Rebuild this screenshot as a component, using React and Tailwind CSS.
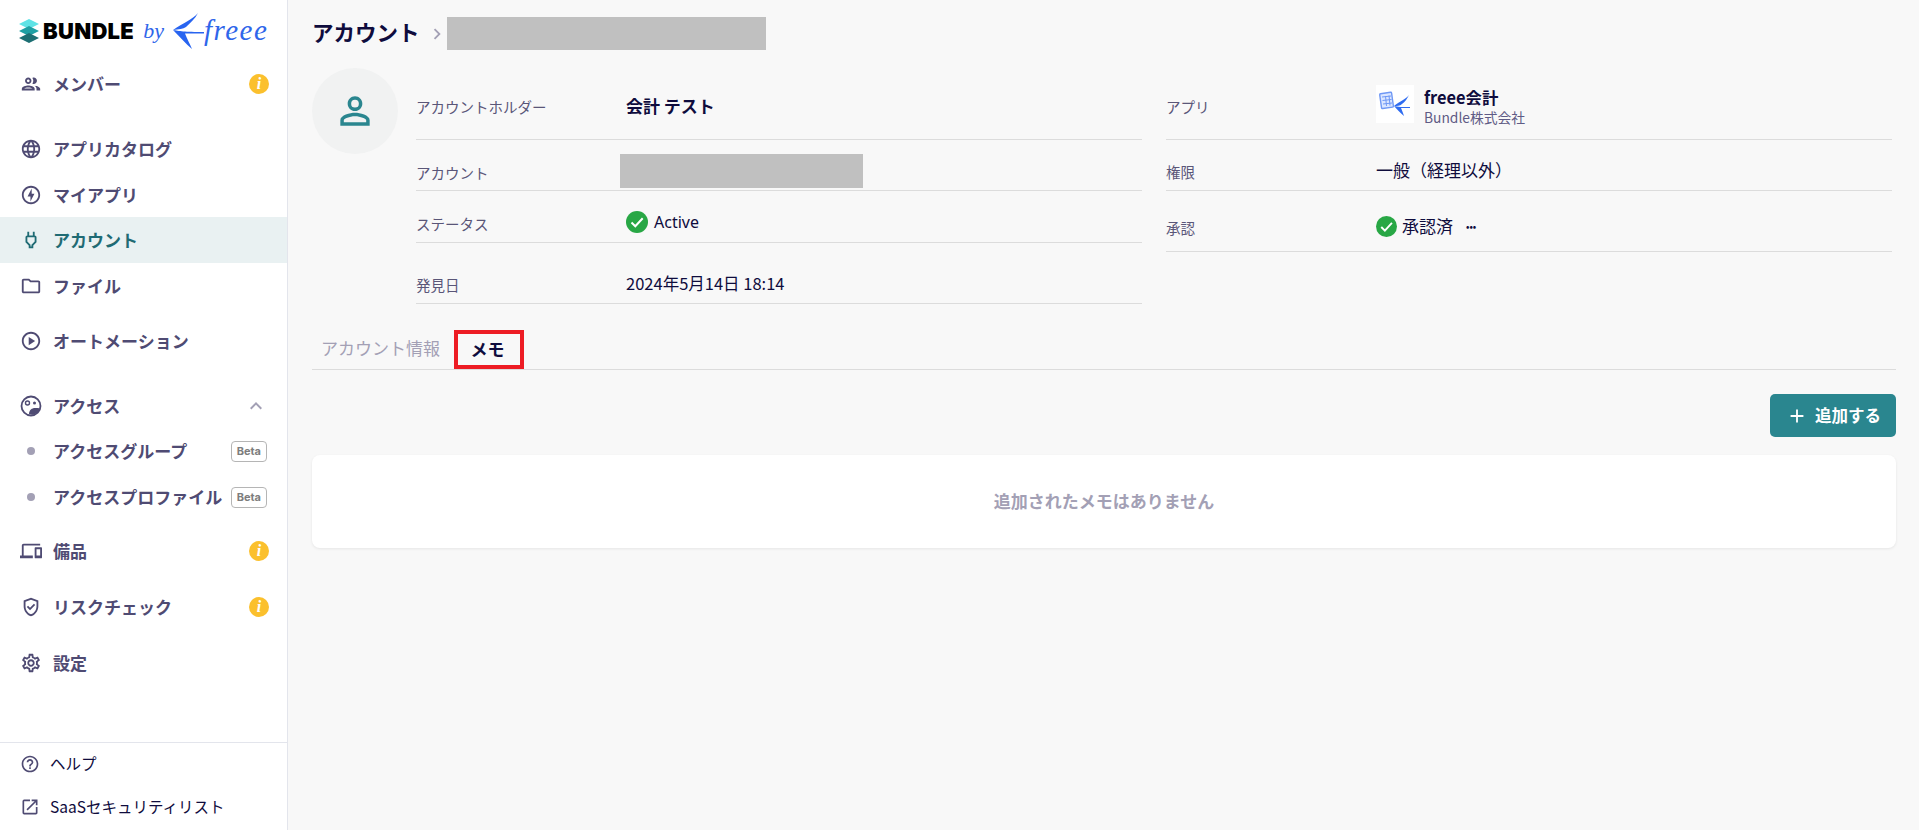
import React from 'react';
import {
  MdOutlinePeople, MdLanguage, MdOutlineOfflineBolt, MdOutlinePower, MdOutlineFolder,
  MdOutlinePlayCircle, MdOutlineDevices, MdOutlineGppGood, MdOutlineSettings,
  MdHelpOutline, MdOpenInNew, MdOutlinePersonOutline, MdExpandLess, MdChevronRight, MdAdd,
} from 'react-icons/md';

const jp = "font-['Noto_Sans_CJK_JP','Noto_Sans',sans-serif]";

const BundleMark = () => (
  <svg width="22" height="24" viewBox="0 0 22 24">
    <path d="M11 0l10 5-10 5-10-5z" fill="#5fe3e6" />
    <path d="M11 7l10 5-10 5-10-5z" fill="#1fa0a4" />
    <path d="M11 14l10 5-10 5-10-5z" fill="#1d6f73" />
  </svg>
);

const FreeeBird = ({ className }) => (
  <svg className={className} viewBox="0 0 32 36">
    <path d="M26 0C21 6 11 10 1 17c6-1 10-1 13-3C18 10 23 6 26 0z" fill="#2864f0" />
    <path d="M1 17c6 1 11 2 31 2v1.500H13C15 26 18 31 20 36 14 31 8 24 1 17z" fill="#2864f0" />
  </svg>
);

const Logo = () => (
  <div className="flex items-center h-[61px] pl-[18px]">
    <BundleMark />
    <span className="ml-[3px] font-['Inter'] font-black text-[22px] tracking-[0.3px] text-black leading-none">BUNDLE</span>
    <span className="ml-[9px] font-['Liberation_Serif'] italic text-[22px] text-[#2f66ea] leading-none">by</span>
    <FreeeBird className="ml-[8px] w-[32px] h-[36px]" />
    <span className="font-['Liberation_Serif'] italic text-[29px] tracking-[1.5px] text-[#2f66ea] leading-none">freee</span>
  </div>
);

const InfoBadge = () => (
  <span className="flex w-5 h-5 -mr-[1px] items-center justify-center rounded-full bg-[#fbc02d] font-['Liberation_Serif'] italic font-bold text-[16px] leading-none text-white">
    i
  </span>
);

const AccessIcon = () => (
  <svg width="22" height="22" viewBox="0 0 22 22" fill="none">
    <circle cx="11" cy="11" r="9.5" stroke="currentColor" strokeWidth="1.8" />
    <circle cx="7.500" cy="8" r="2" stroke="currentColor" strokeWidth="1.4" />
    <circle cx="14.500" cy="8" r="1.500" fill="currentColor" />
    <path d="M9 19c0-4 3-6 6-6 2 0 4 0 5 .5-1 3-4 6-8 6.200z" fill="currentColor" />
  </svg>
);

const CheckCircle = ({ size }) => (
  <svg width={size} height={size} viewBox="0 0 22 22">
    <circle cx="11" cy="11" r="11" fill="#28a745" />
    <path d="M5.500 11.500l3.800 3.800 7.400-8" fill="none" stroke="#fff" strokeWidth="2" />
  </svg>
);

const NavItem = ({ icon: Icon, label, active, right, className = '' }) => (
  <div className={`flex items-center h-[46px] pl-[20px] pr-[19px] text-[17px] font-bold ${active ? 'bg-[#e9f1f2] text-[#1f6b74]' : 'text-[#4f4b73]'} ${className}`}>
    <span className="flex w-[22px] justify-center">
      <Icon size={24} />
    </span>
    <span className="ml-[11px] flex-1">{label}</span>
    {right}
  </div>
);

const SubItem = ({ label, className = '' }) => (
  <div className={`flex items-center h-[46px] pl-[27px] pr-[20px] text-[17px] font-bold text-[#4f4b73] ${className}`}>
    <span className="w-2 h-2 rounded-full bg-[#a3a0b5]" />
    <span className="ml-[18px] flex-1 whitespace-nowrap">{label}</span>
    <span className="flex items-center h-[21px] px-[5px] rounded-[4px] border border-[#b5b5b5] font-['Inter'] text-[11px] font-bold text-[#7d7d7d]">
      Beta
    </span>
  </div>
);

const Sidebar = () => (
  <aside className="flex flex-col w-[288px] shrink-0 h-full bg-white border-r border-[#e3e5ec]">
    <Logo />
    <NavItem icon={MdOutlinePeople} label="メンバー" right={<InfoBadge />} />
    <NavItem icon={MdLanguage} label="アプリカタログ" className="mt-[19px]" />
    <NavItem icon={MdOutlineOfflineBolt} label="マイアプリ" className="-mb-[1px]" />
    <NavItem icon={MdOutlinePower} label="アカウント" active />
    <NavItem icon={MdOutlineFolder} label="ファイル" />
    <NavItem icon={MdOutlinePlayCircle} label="オートメーション" className="mt-[9px]" />
    <NavItem icon={AccessIcon} label="アクセス" className="mt-[19px]" right={<MdExpandLess size={24} className="text-[#a3a0b5]" />} />
    <SubItem label="アクセスグループ" className="-mt-[1px]" />
    <SubItem label="アクセスプロファイル" />
    <NavItem icon={MdOutlineDevices} label="備品" className="mt-[8px]" right={<InfoBadge />} />
    <NavItem icon={MdOutlineGppGood} label="リスクチェック" className="mt-[10px]" right={<InfoBadge />} />
    <NavItem icon={MdOutlineSettings} label="設定" className="mt-[10px]" />
    <div className="mt-auto border-t border-[#e3e5ec] pb-[2px]">
      <div className="flex items-center h-[42px] pl-[20px] text-[15.5px] text-[#0f0c3d]">
        <MdHelpOutline size={20} className="text-[#4f4b73]" />
        <span className="ml-[10px]">ヘルプ</span>
      </div>
      <div className="flex items-center h-[43px] pl-[20px] text-[15.5px] text-[#0f0c3d]">
        <MdOpenInNew size={20} className="text-[#4f4b73]" />
        <span className="ml-[10px]">SaaSセキュリティリスト</span>
      </div>
    </div>
  </aside>
);

const Row = ({ label, children, className, labelClass = '' }) => (
  <div className={`flex border-b border-[#dcdcdc] ${className}`}>
    <div className={`w-[210px] shrink-0 text-[14.5px] text-[#5a5678] ${labelClass}`}>{label}</div>
    <div className="flex-1 min-w-0 text-[17px] text-[#0f0c3d]">{children}</div>
  </div>
);

const AppTile = () => (
  <svg width="38" height="38" viewBox="0 0 38 38" className="bg-white">
    <rect x="4.500" y="8" width="12" height="15" rx="1" transform="rotate(-8 10 15)" fill="#dbe6ff" stroke="#6f98f5" strokeWidth="1.400" />
    <path d="M6 12l9-1M6.500 15.500l9-1M7 19l9-1M9.500 11l1 10M13 10.500l1 10" stroke="#6f98f5" strokeWidth="1" />
    <path d="M33 10c-3 4-9 6-15 11 3 0 6 0 8-2 3-2 5-5 7-9z" fill="#2f6cf0" />
    <path d="M18 21c4 1 8 1 16 1v1h-9c1 2 2 5 3 8-4-3-7-7-10-10z" fill="#2f6cf0" />
  </svg>
);

const Details = () => (
  <div className="flex mt-[18px]">
    <div className="flex items-center justify-center w-[86px] h-[86px] shrink-0 rounded-full bg-[#f1f2f2]">
      <MdOutlinePersonOutline size={44} className="text-[#2a868f]" />
    </div>
    <div className="grid grid-cols-2 gap-x-[24px] ml-[18px] flex-1 pr-[4px]">
      <div>
        <Row label="アカウントホルダー" className="h-[72px] items-center pt-[6px]">
          <span className="font-bold -mt-[1px] block">会計 テスト</span>
        </Row>
        <Row label="アカウント" className="h-[51px] relative pt-[22px]">
          <div className="absolute left-[204px] top-[14px] w-[243px] h-[34px] bg-[#c0c0c0]" />
        </Row>
        <Row label="ステータス" className="h-[52px] items-center pt-[14px]">
          <span className="flex items-center gap-[6px] -mt-[3px]">
            <CheckCircle size={22} />
            <span className="font-['Noto_Sans'] text-[16px]">Active</span>
          </span>
        </Row>
        <Row label="発見日" className="h-[61px] items-center pt-[24px]">
          <span className="-mt-[4px] block text-[16.5px]">2024年5月14日 18:14</span>
        </Row>
      </div>
      <div>
        <Row label="アプリ" className="h-[72px] items-center pt-[6px]">
          <div className="flex items-center gap-[10px] -mt-[6px]">
            <AppTile />
            <div className="leading-none mt-[6px]">
              <div className="font-bold text-[16.4px] leading-[21px]">freee会計</div>
              <div className="text-[13.8px] leading-[19px] text-[#5f5b85]">Bundle株式会社</div>
            </div>
          </div>
        </Row>
        <Row label="権限" className="h-[51px] items-center pt-[12px]" labelClass="mt-[2px]">
          <span className="block -mt-[2px]">一般（経理以外）</span>
        </Row>
        <Row label="承認" className="h-[61px] items-center pt-[14px]">
          <span className="flex items-center gap-[5px] -mt-[4px]">
            <CheckCircle size={21} />
            <span>承認済</span>
            <span className="ml-[8px] text-[9px] font-bold leading-none">•••</span>
          </span>
        </Row>
      </div>
    </div>
  </div>
);

const Tabs = () => (
  <div className="flex items-end mt-[27px] h-[39px] border-b border-[#dcdcdc]">
    <div className="flex items-center h-[39px] pl-[9px] pr-[14px] pb-[3px] text-[17px] text-[#a3a0b5]">アカウント情報</div>
    <div className="flex items-center justify-center w-[70px] h-[39px] pr-[3px] pb-[1px] border-[4px] border-[#ed1c24] text-[17px] font-bold text-[#0f0c3d]">
      メモ
    </div>
  </div>
);

export default function App() {
  return (
    <div className={`flex w-full h-screen overflow-hidden bg-[#f8f8f8] ${jp}`}>
      <Sidebar />
      <main className="flex-1 min-w-0 pl-[24px] pr-[23px]">
        <div className="flex items-center h-[50px] pt-[17px]">
          <h1 className="text-[21.5px] font-bold text-[#0f0c3d] leading-none -mt-[4px]">アカウント</h1>
          <MdChevronRight size={22} className="ml-[6px] text-[#a3a0b5]" />
          <div className="w-[319px] h-[33px] -ml-[1px] bg-[#c0c0c0]" />
        </div>
        <Details />
        <Tabs />
        <div className="flex justify-end mt-[24px]">
          <button className="flex items-center h-[43px] w-[126px] pl-[16px] rounded-[5px] bg-[#2a868f] text-white text-[16.5px] font-bold">
            <MdAdd size={22} />
            <span className="ml-[7px]">追加する</span>
          </button>
        </div>
        <div className="flex items-center justify-center h-[93px] mt-[18px] pb-[2px] rounded-[8px] bg-white shadow-[0_1px_3px_rgba(0,0,0,0.08)] text-[17px] font-bold text-[#a3a0b5]">
          追加されたメモはありません
        </div>
      </main>
    </div>
  );
}
